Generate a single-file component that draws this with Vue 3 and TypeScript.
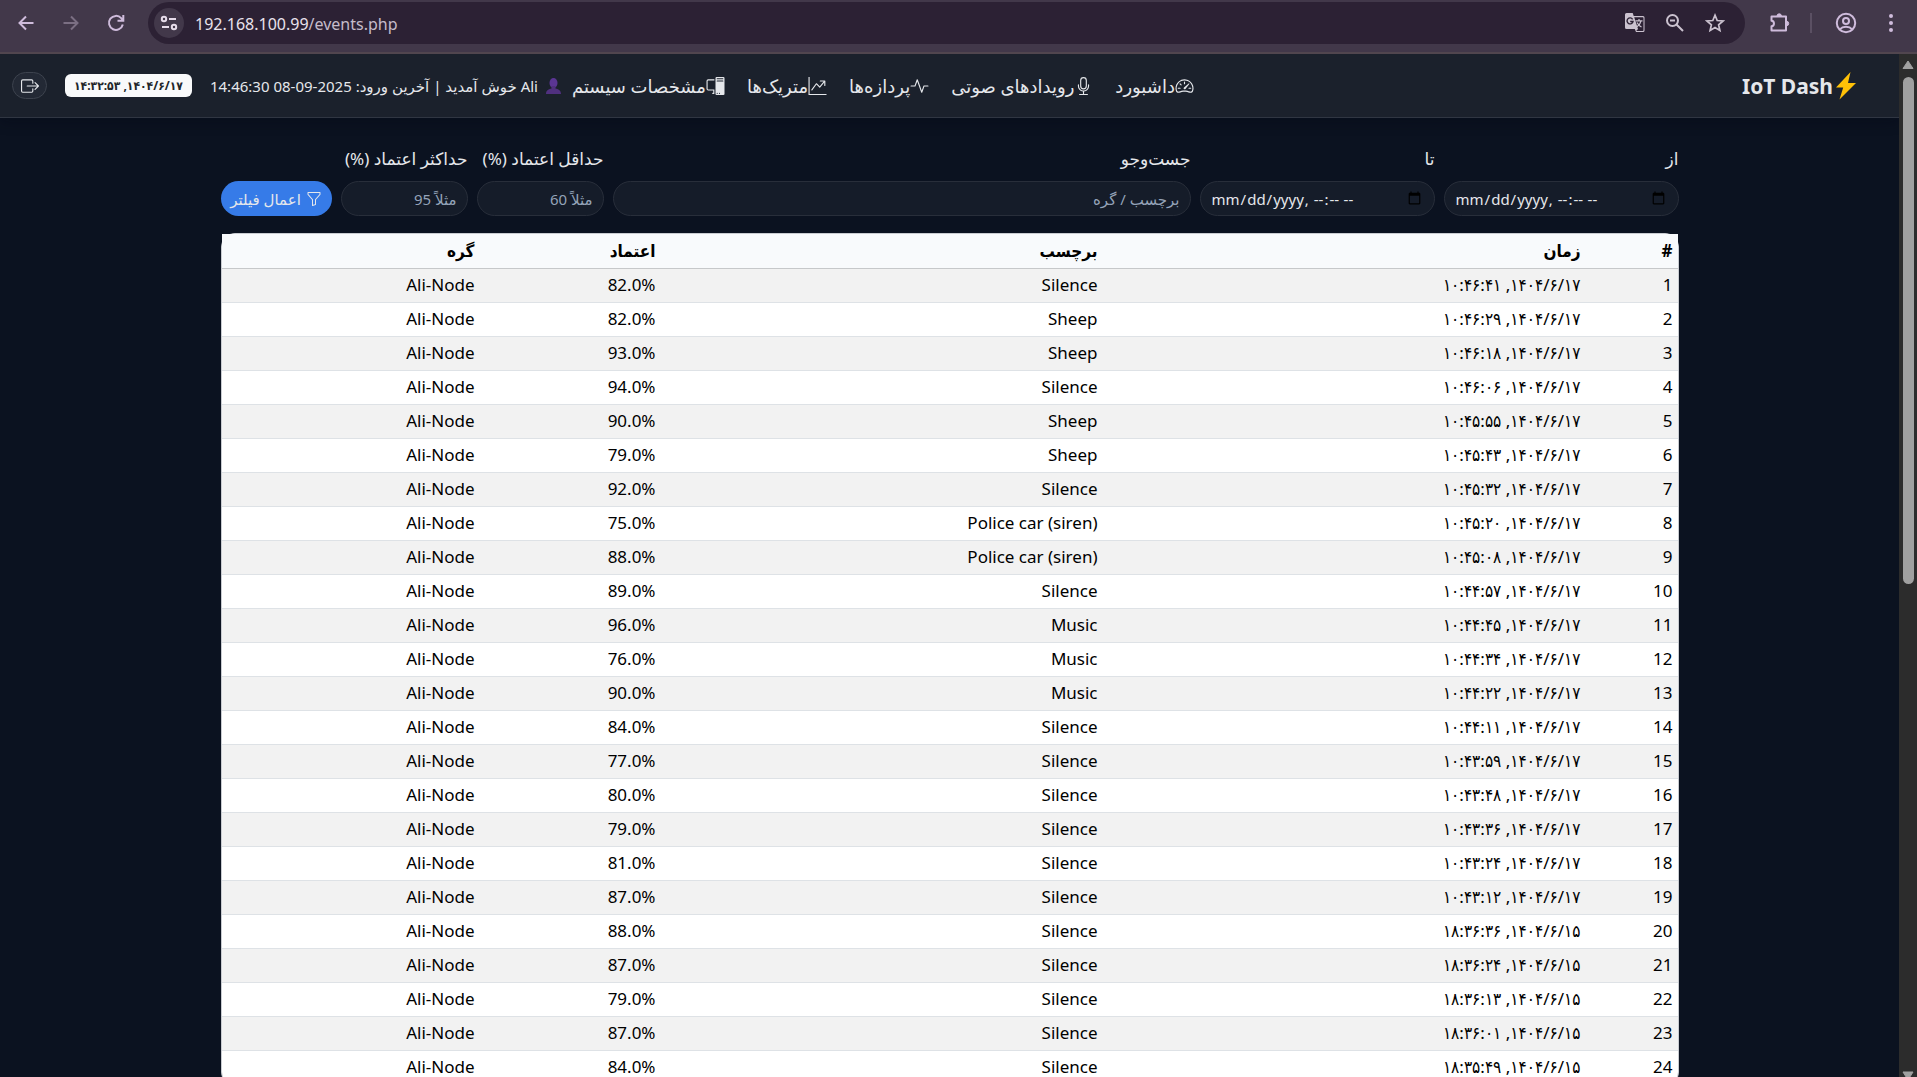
<script setup lang="ts">
interface EventRow {
  id: number
  time: string
  label: string
  confidence: string
  node: string
}

const day17 = '۱۴۰۴/۶/۱۷'
const day15 = '۱۴۰۴/۶/۱۵'

const source: [string, string, string, string][] = [
  [day17, '۱۰:۴۶:۴۱', 'Silence', '82.0%'],
  [day17, '۱۰:۴۶:۲۹', 'Sheep', '82.0%'],
  [day17, '۱۰:۴۶:۱۸', 'Sheep', '93.0%'],
  [day17, '۱۰:۴۶:۰۶', 'Silence', '94.0%'],
  [day17, '۱۰:۴۵:۵۵', 'Sheep', '90.0%'],
  [day17, '۱۰:۴۵:۴۳', 'Sheep', '79.0%'],
  [day17, '۱۰:۴۵:۳۲', 'Silence', '92.0%'],
  [day17, '۱۰:۴۵:۲۰', 'Police car (siren)', '75.0%'],
  [day17, '۱۰:۴۵:۰۸', 'Police car (siren)', '88.0%'],
  [day17, '۱۰:۴۴:۵۷', 'Silence', '89.0%'],
  [day17, '۱۰:۴۴:۴۵', 'Music', '96.0%'],
  [day17, '۱۰:۴۴:۳۴', 'Music', '76.0%'],
  [day17, '۱۰:۴۴:۲۲', 'Music', '90.0%'],
  [day17, '۱۰:۴۴:۱۱', 'Silence', '84.0%'],
  [day17, '۱۰:۴۳:۵۹', 'Silence', '77.0%'],
  [day17, '۱۰:۴۳:۴۸', 'Silence', '80.0%'],
  [day17, '۱۰:۴۳:۳۶', 'Silence', '79.0%'],
  [day17, '۱۰:۴۳:۲۴', 'Silence', '81.0%'],
  [day17, '۱۰:۴۳:۱۲', 'Silence', '87.0%'],
  [day15, '۱۸:۳۶:۳۶', 'Silence', '88.0%'],
  [day15, '۱۸:۳۶:۲۴', 'Silence', '87.0%'],
  [day15, '۱۸:۳۶:۱۳', 'Silence', '79.0%'],
  [day15, '۱۸:۳۶:۰۱', 'Silence', '87.0%'],
  [day15, '۱۸:۳۵:۴۹', 'Silence', '84.0%'],
]

const rows: EventRow[] = source.map(([day, clock, label, confidence], i) => ({
  id: i + 1,
  time: `${day}, ${clock}`,
  label,
  confidence,
  node: 'Ali-Node',
}))
</script>

<template>
  <div class="window">
    <header class="toolbar">
      <button class="tool" aria-label="Back">
        <svg width="20" height="20" viewBox="0 0 20 20" fill="none" stroke="currentColor" stroke-width="2"><path d="M17.500 10H4M10 3.500 3.500 10l6.500 6.500" /></svg>
      </button>
      <button class="tool dim" aria-label="Forward">
        <svg width="20" height="20" viewBox="0 0 20 20" fill="none" stroke="currentColor" stroke-width="2"><path d="M2.500 10H16M10 3.500l6.500 6.500-6.500 6.500" /></svg>
      </button>
      <button class="tool" aria-label="Reload">
        <svg width="20" height="20" viewBox="0 0 20 20" fill="none" stroke="currentColor" stroke-width="2"><path d="M16.800 11.500A7 7 0 1 1 15.200 5.200L17 7.300M17.300 2v5.800h-5.800" /></svg>
      </button>
      <div class="address">
        <button class="site" aria-label="Site information">
          <svg width="18" height="18" viewBox="0 0 18 18" fill="none" stroke="currentColor" stroke-width="2"><circle cx="4" cy="5" r="2.200" /><path d="M9 5h7M2 13h7" /><circle cx="14" cy="13" r="2.200" /></svg>
        </button>
        <span class="url">192.168.100.99<span class="path">/events.php</span></span>
        <button class="mini" aria-label="Translate">
          <svg width="22" height="22" viewBox="0 0 22 22"><path d="M2.500 1h6.200l1 3H19a1.500 1.500 0 0 1 1.500 1.500v13A1.500 1.500 0 0 1 19 20h-7l-1.200-3H2.500A1.500 1.500 0 0 1 1 15.500v-13A1.500 1.500 0 0 1 2.500 1z" fill="#cbc2cf" /><path d="M10.200 5.300 14 17l-1.800 2h6.600a.700.700 0 0 0 .700-.700V6a.700.700 0 0 0-.700-.700z" fill="#2c2134" /><path d="M11.500 8.800h7M15 7v1.800M17 8.800c-.500 2.700-2 4.500-4 6M13 10.500c1 2 2.500 3.500 4.500 4.500" fill="none" stroke="#cbc2cf" stroke-width="1.200" /><path d="M8.600 7.300A3 3 0 1 0 9 9.500H6.200" fill="none" stroke="#2c2134" stroke-width="1.400" /></svg>
        </button>
        <button class="mini" aria-label="Zoom">
          <svg width="20" height="20" viewBox="0 0 20 20" fill="none" stroke="#cbc2cf" stroke-width="2"><circle cx="7.500" cy="7.500" r="5.500" /><path d="m11.500 11.500 6.500 6.500M5 7.500h5" /></svg>
        </button>
        <button class="mini" aria-label="Bookmark">
          <svg width="20" height="20" viewBox="0 0 20 20" fill="none" stroke="#cbc2cf" stroke-width="1.700"><path d="m10 2.200 2.200 5.300 5.800.500-4.400 3.800 1.300 5.700-4.900-3-4.900 3 1.300-5.700L2 8l5.800-.500z" /></svg>
        </button>
      </div>
      <button class="tool ext" aria-label="Extensions">
        <svg width="22" height="22" viewBox="0 0 22 22" fill="none" stroke="currentColor" stroke-width="2"><path d="M2.500 4.500H17v14H2.500v-4.200c3.300-.300 3.300-5.300 0-5.600z" stroke-linejoin="round" /><path d="M8 4a2.200 2.200 0 0 1 4.400 0zM17.500 9.300a2.200 2.200 0 0 1 0 4.400z" fill="currentColor" stroke-width="1" /></svg>
      </button>
      <span class="divider"></span>
      <button class="tool" aria-label="Profile">
        <svg width="22" height="22" viewBox="0 0 22 22" fill="none" stroke="currentColor" stroke-width="2"><circle cx="11" cy="11" r="9.200" /><circle cx="11" cy="9" r="3" /><path d="M4.800 17.300c3-3.300 9.400-3.300 12.400 0" /></svg>
      </button>
      <button class="tool menu" aria-label="Menu">
        <svg width="6" height="20" viewBox="0 0 6 20" fill="currentColor"><circle cx="3" cy="3" r="2" /><circle cx="3" cy="10" r="2" /><circle cx="3" cy="17" r="2" /></svg>
      </button>
    </header>

    <div class="viewport">
      <div class="page" dir="rtl" lang="fa">
        <nav class="navbar">
          <a class="brand" href="#"><svg width="22" height="28" viewBox="0 0 22 28"><path d="M15.500 0 1 15.500h7.200L4.500 27.500 21 11h-8z" fill="#ffc107" /></svg><span>IoT Dash</span></a>
          <div class="links">
            <a href="#"><svg class="bi" viewBox="0 0 16 16"><path d="M8 4a.5.5 0 0 1 .5.5V6a.5.5 0 0 1-1 0V4.500A.5.5 0 0 1 8 4M3.732 5.732a.5.5 0 0 1 .707 0l.915.914a.5.5 0 1 1-.708.708l-.914-.915a.5.5 0 0 1 0-.707M2 10a.5.5 0 0 1 .5-.5h1.586a.5.5 0 0 1 0 1H2.500A.5.5 0 0 1 2 10m9.500 0a.5.5 0 0 1 .5-.5h1.500a.5.5 0 0 1 0 1H12a.5.5 0 0 1-.5-.5m.754-4.246a.39.39 0 0 0-.527-.02L7.547 9.310a.91.91 0 1 0 1.302 1.258l3.434-4.297a.39.39 0 0 0-.029-.518z" /><path fill-rule="evenodd" d="M0 10a8 8 0 1 1 15.547 2.661c-.442 1.253-1.845 1.602-2.932 1.250C11.309 13.488 9.475 13 8 13c-1.474 0-3.310.488-4.615.911-1.087.352-2.490.003-2.932-1.250A8 8 0 0 1 0 10m8-7a7 7 0 0 0-6.603 9.329c.203.575.923.876 1.680.630C4.397 12.533 6.358 12 8 12s3.604.532 4.923.960c.757.245 1.477-.056 1.680-.631A7 7 0 0 0 8 3" /></svg><span>داشبورد</span></a>
            <a href="#"><svg class="bi" viewBox="0 0 16 16"><path d="M3.500 6.500A.5.5 0 0 1 4 7v1a4 4 0 0 0 8 0V7a.5.5 0 0 1 1 0v1a5 5 0 0 1-4.500 4.975V15h3a.5.5 0 0 1 0 1h-7a.5.5 0 0 1 0-1h3v-2.025A5 5 0 0 1 3 8V7a.5.5 0 0 1 .5-.5" /><path d="M10 8a2 2 0 1 1-4 0V3a2 2 0 1 1 4 0zM8 0a3 3 0 0 0-3 3v5a3 3 0 0 0 6 0V3a3 3 0 0 0-3-3" /></svg><span>رویدادهای صوتی</span></a>
            <a href="#"><svg class="bi" viewBox="0 0 16 16"><path fill-rule="evenodd" d="M6 2a.5.5 0 0 1 .470.330L10 12.036l1.530-4.208A.5.5 0 0 1 12 7.500h3.500a.5.5 0 0 1 0 1h-3.150l-1.880 5.170a.5.5 0 0 1-.940 0L6 3.964 4.470 8.171A.5.5 0 0 1 4 8.500H.5a.5.5 0 0 1 0-1h3.150l1.880-5.170A.5.5 0 0 1 6 2" /></svg><span>پردازه‌ها</span></a>
            <a href="#"><svg class="bi" viewBox="0 0 16 16"><path fill-rule="evenodd" d="M0 0h1v15h15v1H0zm10 3.500a.5.5 0 0 1 .5-.5h4a.5.5 0 0 1 .5.5v4a.5.5 0 0 1-1 0V4.900l-3.613 4.417a.5.5 0 0 1-.740.037L7.060 6.767l-3.656 5.027a.5.5 0 0 1-.808-.588l4-5.500a.5.5 0 0 1 .758-.060l2.609 2.610L13.445 4H10.500a.5.5 0 0 1-.5-.5" /></svg><span>متریک‌ها</span></a>
            <a href="#"><svg class="bi" viewBox="0 0 16 16"><path d="M8 1a1 1 0 0 1 1-1h6a1 1 0 0 1 1 1v14a1 1 0 0 1-1 1H9a1 1 0 0 1-1-1zm1 13.500a.5.5 0 1 0 1 0 .5.5 0 0 0-1 0m2 0a.5.5 0 1 0 1 0 .5.5 0 0 0-1 0M9.500 1a.5.5 0 0 0 0 1h5a.5.5 0 0 0 0-1zM9 3.500a.5.5 0 0 0 .5.5h5a.5.5 0 0 0 0-1h-5a.5.5 0 0 0-.5.5M1.500 2A1.500 1.500 0 0 0 0 3.500v7A1.500 1.500 0 0 0 1.500 12H6v2h-.5a.5.5 0 0 0 0 1H7v-4H1.500a.5.5 0 0 1-.5-.5v-7a.5.5 0 0 1 .5-.5H7V2z" /></svg><span>مشخصات سیستم</span></a>
          </div>
          <div class="user">
            <svg width="15" height="16" viewBox="0 0 15 16"><ellipse cx="7.500" cy="5" rx="4" ry="5" fill="#5b3594" /><path d="M0 16c0-4 3-5 5.500-5.500V8h4v2.500C12 11 15 12 15 16z" fill="#50307f" /></svg>
            <span>Ali خوش آمدید | آخرین ورود: 2025-09-08 14:46:30</span>
          </div>
          <span class="clock">۱۴۰۴/۶/۱۷, ۱۴:۳۲:۵۳</span>
          <button class="logout" aria-label="خروج">
            <svg width="18" height="18" viewBox="0 0 16 16" fill="currentColor"><path fill-rule="evenodd" d="M10 12.500a.5.5 0 0 1-.5.5h-8a.5.5 0 0 1-.5-.5v-9a.5.5 0 0 1 .5-.5h8a.5.5 0 0 1 .5.5v2a.5.5 0 0 0 1 0v-2A1.500 1.500 0 0 0 9.500 2h-8A1.500 1.500 0 0 0 0 3.500v9A1.500 1.500 0 0 0 1.500 14h8a1.500 1.500 0 0 0 1.500-1.500v-2a.5.5 0 0 0-1 0z" /><path fill-rule="evenodd" d="M15.854 8.354a.5.5 0 0 0 0-.708l-3-3a.5.5 0 0 0-.708.708L14.293 7.500H5.500a.5.5 0 0 0 0 1h8.793l-2.147 2.146a.5.5 0 0 0 .708.708z" /></svg>
          </button>
        </nav>

        <main class="container">
          <form class="filters" @submit.prevent>
            <div class="field date">
              <label for="from">از</label>
              <input id="from" type="datetime-local" dir="ltr" />
            </div>
            <div class="field date">
              <label for="to">تا</label>
              <input id="to" type="datetime-local" dir="ltr" />
            </div>
            <div class="field search">
              <label for="query">جست‌وجو</label>
              <input id="query" type="text" placeholder="برچسب / گره" />
            </div>
            <div class="field percent">
              <label for="min">حداقل اعتماد (%)</label>
              <input id="min" type="text" placeholder="مثلاً 60" />
            </div>
            <div class="field percent">
              <label for="max">حداکثر اعتماد (%)</label>
              <input id="max" type="text" placeholder="مثلاً 95" />
            </div>
            <button class="apply" type="submit">
              <svg width="16" height="16" viewBox="0 0 16 16" fill="currentColor"><path d="M1.500 1.500A.5.5 0 0 1 2 1h12a.5.5 0 0 1 .5.5v2a.5.5 0 0 1-.128.334L10 8.692V13.500a.5.5 0 0 1-.342.474l-3 1A.5.5 0 0 1 6 14.500V8.692L1.628 3.834A.5.5 0 0 1 1.500 3.500zm1 .5v1.308l4.372 4.858A.5.5 0 0 1 7 8.500v5.306l2-.666V8.500a.5.5 0 0 1 .128-.334L13.500 3.308V2z" /></svg>
              <span>اعمال فیلتر</span>
            </button>
          </form>

          <div class="card">
            <table>
              <colgroup>
                <col class="c-id" /><col class="c-time" /><col class="c-label" /><col class="c-conf" /><col />
              </colgroup>
              <thead>
                <tr><th>#</th><th>زمان</th><th>برچسب</th><th>اعتماد</th><th>گره</th></tr>
              </thead>
              <tbody>
                <tr v-for="row in rows" :key="row.id">
                  <td>{{ row.id }}</td>
                  <td>{{ row.time }}</td>
                  <td><bdi>{{ row.label }}</bdi></td>
                  <td><bdi dir="ltr">{{ row.confidence }}</bdi></td>
                  <td>{{ row.node }}</td>
                </tr>
              </tbody>
            </table>
          </div>
        </main>
      </div>
      <div class="scrollbar" aria-hidden="true">
        <svg width="12" height="10" viewBox="0 0 12 10"><path d="M6 1 11 8.500H1z" fill="#a0a0a0" stroke="#a0a0a0" stroke-linejoin="round" /></svg>
        <div class="track"><div class="thumb"></div></div>
        <svg width="12" height="6" viewBox="0 0 12 6"><path d="M1 1h10L6 9z" fill="#a0a0a0" stroke="#a0a0a0" stroke-linejoin="round" /></svg>
      </div>
    </div>
  </div>
</template>

<style>
body {
  margin: 0;
  background: #0b1220;
}
</style>

<style scoped>
* {
  box-sizing: border-box;
}
.window {
  height: 100vh;
  display: flex;
  flex-direction: column;
  overflow: hidden;
  font-family: "Noto Sans", "DejaVu Sans", sans-serif;
  font-size: 17px;
  color: #e5e7eb;
}
button,
input {
  font-family: inherit;
}
button {
  padding: 0;
  border: 0;
  background: none;
  color: inherit;
  display: flex;
  align-items: center;
  justify-content: center;
}
svg {
  flex: none;
  display: block;
}

.toolbar {
  flex: none;
  height: 54px;
  display: flex;
  align-items: center;
  padding: 0 12px 6px 16px;
  background: #42384a;
  border-bottom: 2px solid #51464f;
  color: #cfbcdc;
}
.tool {
  width: 20px;
  margin-right: 25px;
}
.tool.dim {
  color: #7b6f83;
}
.address {
  flex: 1;
  height: 42px;
  display: flex;
  align-items: center;
  gap: 20px;
  margin-left: -3px;
  padding: 0 20px 0 6px;
  border-radius: 21px;
  background: #2c2134;
}
.site {
  width: 30px;
  height: 30px;
  border-radius: 50%;
  background: #42384a;
  color: #e6dcea;
}
.url {
  flex: 1;
  margin-left: -9px;
  padding-top: 2px;
  font-size: 16px;
  color: #e9e2ec;
}
.path {
  color: #c5bcca;
}
.mini {
  width: 20px;
}
.tool.ext {
  margin: 0 20px 0 25px;
}
.divider {
  width: 2px;
  height: 20px;
  margin-right: 24px;
  background: #5b5063;
}
.tool.menu {
  margin-right: 4px;
}

.viewport {
  flex: 1;
  min-height: 0;
  display: flex;
}
.page {
  flex: 1;
  min-width: 0;
  overflow: hidden;
  background: #0b1220;
}
.navbar {
  height: 64px;
  display: flex;
  align-items: center;
  padding: 0 42px 0 12px;
  background: #1b212c;
  border-bottom: 1px solid #303642;
  box-shadow: 0 4px 12px rgba(4, 6, 20, 0.3);
}
a {
  color: inherit;
  text-decoration: none;
}
.brand {
  display: flex;
  align-items: center;
  gap: 2px;
  margin-left: auto;
  font-size: 21px;
  font-weight: 700;
}
.links {
  display: flex;
  gap: 22px;
  margin-left: 11px;
  font-size: 18px;
}
.links a {
  display: flex;
  align-items: center;
  white-space: nowrap;
}
.bi {
  width: 19px;
  height: 18px;
  fill: currentColor;
}
.user {
  display: flex;
  align-items: center;
  gap: 8px;
  font-size: 15px;
  white-space: nowrap;
}
.clock {
  height: 23px;
  margin: 0 18px;
  padding: 0 9px;
  border-radius: 6px;
  background: #f8f9fa;
  color: #212529;
  font-family: "Noto Sans", "DejaVu Sans Condensed", "DejaVu Sans", sans-serif;
  font-size: 12px;
  font-weight: 700;
  line-height: 23px;
  white-space: nowrap;
}
.logout {
  width: 35px;
  height: 27px;
  border: 1px solid #3d434e;
  border-radius: 14px;
  background: #232935;
}

.container {
  max-width: 1458px;
  margin: 0 auto;
  padding-top: 28px;
}
.filters {
  display: flex;
  align-items: flex-end;
  gap: 9px;
}
.field {
  display: flex;
  flex-direction: column;
  gap: 9px;
}
.field label {
  line-height: 26px;
  white-space: nowrap;
}
.field input {
  width: 100%;
  height: 35px;
  padding: 0 10px;
  border: 1px solid #282e3a;
  border-radius: 18px;
  background: #151c29;
  color: #e5e7eb;
  font-size: 15px;
  outline: none;
}
.field input::placeholder {
  color: #94a3b8;
  opacity: 1;
}
.date {
  flex: 0 0 16%;
}
.search {
  flex: 1;
}
.percent {
  width: 127px;
}
.apply {
  width: 111px;
  height: 35px;
  gap: 5px;
  border-radius: 18px;
  background: #367be8;
  font-size: 15px;
  white-space: nowrap;
}

.card {
  margin-top: 17px;
  border: 1px solid #c9ccd1;
  border-radius: 14px;
  background: #fff;
}
table {
  width: 100%;
  table-layout: fixed;
  border-collapse: collapse;
  color: #000;
  font-family: "Noto Sans", "DejaVu Sans Condensed", "DejaVu Sans", sans-serif;
}
.c-id {
  width: 92px;
}
.c-time {
  width: 483px;
}
.c-label {
  width: 442px;
}
.c-conf {
  width: 181px;
}
th,
td {
  height: 34px;
  padding: 0 5px;
  border-bottom: 1px solid #dee2e6;
  text-align: right;
  line-height: 24px;
  white-space: nowrap;
}
th {
  background: #f8fafc;
  border-bottom-color: #c6c8ca;
  font-weight: 700;
}
tbody tr:nth-child(odd) td {
  background: #f2f2f2;
}

.scrollbar {
  flex: none;
  width: 18px;
  display: flex;
  flex-direction: column;
  align-items: center;
  padding-top: 6px;
  background: #2c2c2c;
}
.track {
  flex: 1;
  padding-top: 7px;
}
.thumb {
  width: 11px;
  height: 51%;
  border-radius: 6px;
  background: #a0a0a0;
}
</style>
